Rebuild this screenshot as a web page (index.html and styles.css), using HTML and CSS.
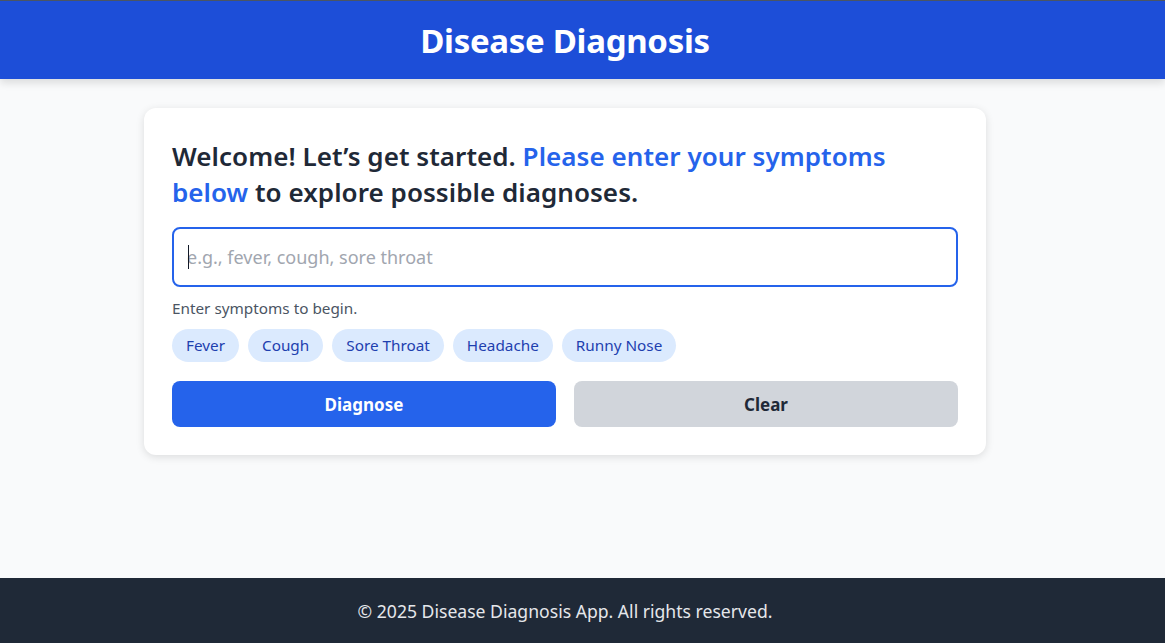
FILE: index.html
```html
<!DOCTYPE html>
<html lang="en">
<head>
<meta charset="utf-8">
<title>Disease Diagnosis</title>
<link rel="stylesheet" href="styles.css">
</head>
<body>
<div class="page">
  <header class="topbar">
    <h1 class="title">Disease Diagnosis</h1>
  </header>
  <main class="main">
    <section class="card">
      <h2 class="welcome">Welcome! Let’s get started. <span class="accent">Please enter your symptoms below</span> to explore possible diagnoses.</h2>
      <div class="field">
        <span class="caret"></span>
        <input class="symptom-input" type="text" placeholder="e.g., fever, cough, sore throat">
      </div>
      <p class="hint">Enter symptoms to begin.</p>
      <div class="chips">
        <span class="chip">Fever</span>
        <span class="chip">Cough</span>
        <span class="chip">Sore Throat</span>
        <span class="chip">Headache</span>
        <span class="chip">Runny Nose</span>
      </div>
      <div class="actions">
        <button class="btn btn-primary">Diagnose</button>
        <button class="btn btn-secondary">Clear</button>
      </div>
    </section>
  </main>
  <footer class="footer">
    <p class="copy">© 2025 Disease Diagnosis App. All rights reserved.</p>
  </footer>
</div>
</body>
</html>
```
FILE: styles.css
```css
* { box-sizing: border-box; }
html, body { margin: 0; padding: 0; height: 100%; }
body {
  font-family: "Noto Sans", "Open Sans", sans-serif;
  background: #f9fafb;
  color: #1f2937;
}
.page {
  min-height: 643px;
  display: flex;
  flex-direction: column;
}
.topbar {
  background: #1d4ed8;
  border-top: 1px solid #4b5563;
  height: 79px;
  display: flex;
  align-items: center;
  justify-content: center;
  padding-right: 35px;
  box-shadow: 0 4px 8px rgba(0,0,0,0.12);
  position: relative;
  z-index: 1;
}
.title {
  margin: 0;
  color: #ffffff;
  font-size: 33px;
  font-weight: 700;
  letter-spacing: -0.3px;
}
.main {
  flex: 1;
  padding: 29px 35px 0 0;
}
.card {
  width: 842px;
  margin: 0 auto;
  background: #ffffff;
  border-radius: 12px;
  box-shadow: 0 2px 8px rgba(0,0,0,0.12);
  padding: 30px 28px 28px;
}
.welcome {
  margin: 0 0 17px;
  max-width: 760px;
  font-size: 26px;
  font-weight: 600;
  line-height: 36px;
  color: #1f2937;
  letter-spacing: 0.05px;
}
.accent { color: #2563eb; }
.field {
  position: relative;
}
.caret {
  position: absolute;
  left: 16px;
  top: 18px;
  width: 1px;
  height: 24px;
  background: #111827;
}
.symptom-input {
  display: block;
  width: 100%;
  height: 60px;
  border: 2px solid #2563eb;
  border-radius: 8px;
  padding: 0 13px;
  font-family: "Noto Sans", sans-serif;
  font-size: 18px;
  font-weight: 400;
  color: #111827;
  outline: none;
}
.symptom-input::placeholder { color: #a1a6af; }
.hint {
  margin: 10px 0 10px;
  font-size: 15.3px;
  color: #4b5563;
  line-height: 22px;
}
.chips {
  display: flex;
  gap: 9px;
  margin-bottom: 19px;
}
.chip {
  background: #dbeafe;
  color: #1e40af;
  font-size: 15.3px;
  height: 33px;
  line-height: 33px;
  padding: 0 14px;
  border-radius: 999px;
}
.actions {
  display: flex;
  gap: 18px;
}
.btn {
  flex: 1;
  height: 46px;
  border: none;
  border-radius: 8px;
  font-family: "Noto Sans", sans-serif;
  font-size: 17px;
  font-weight: 700;
}
.btn-primary { background: #2563eb; color: #ffffff; }
.btn-secondary { background: #d1d5db; color: #1f2937; }
.footer {
  background: #1f2937;
  height: 65px;
  display: flex;
  align-items: center;
  justify-content: center;
  padding-right: 35px;
}
.copy {
  margin: 0;
  color: #e5e7eb;
  font-size: 17.6px;
}
```
